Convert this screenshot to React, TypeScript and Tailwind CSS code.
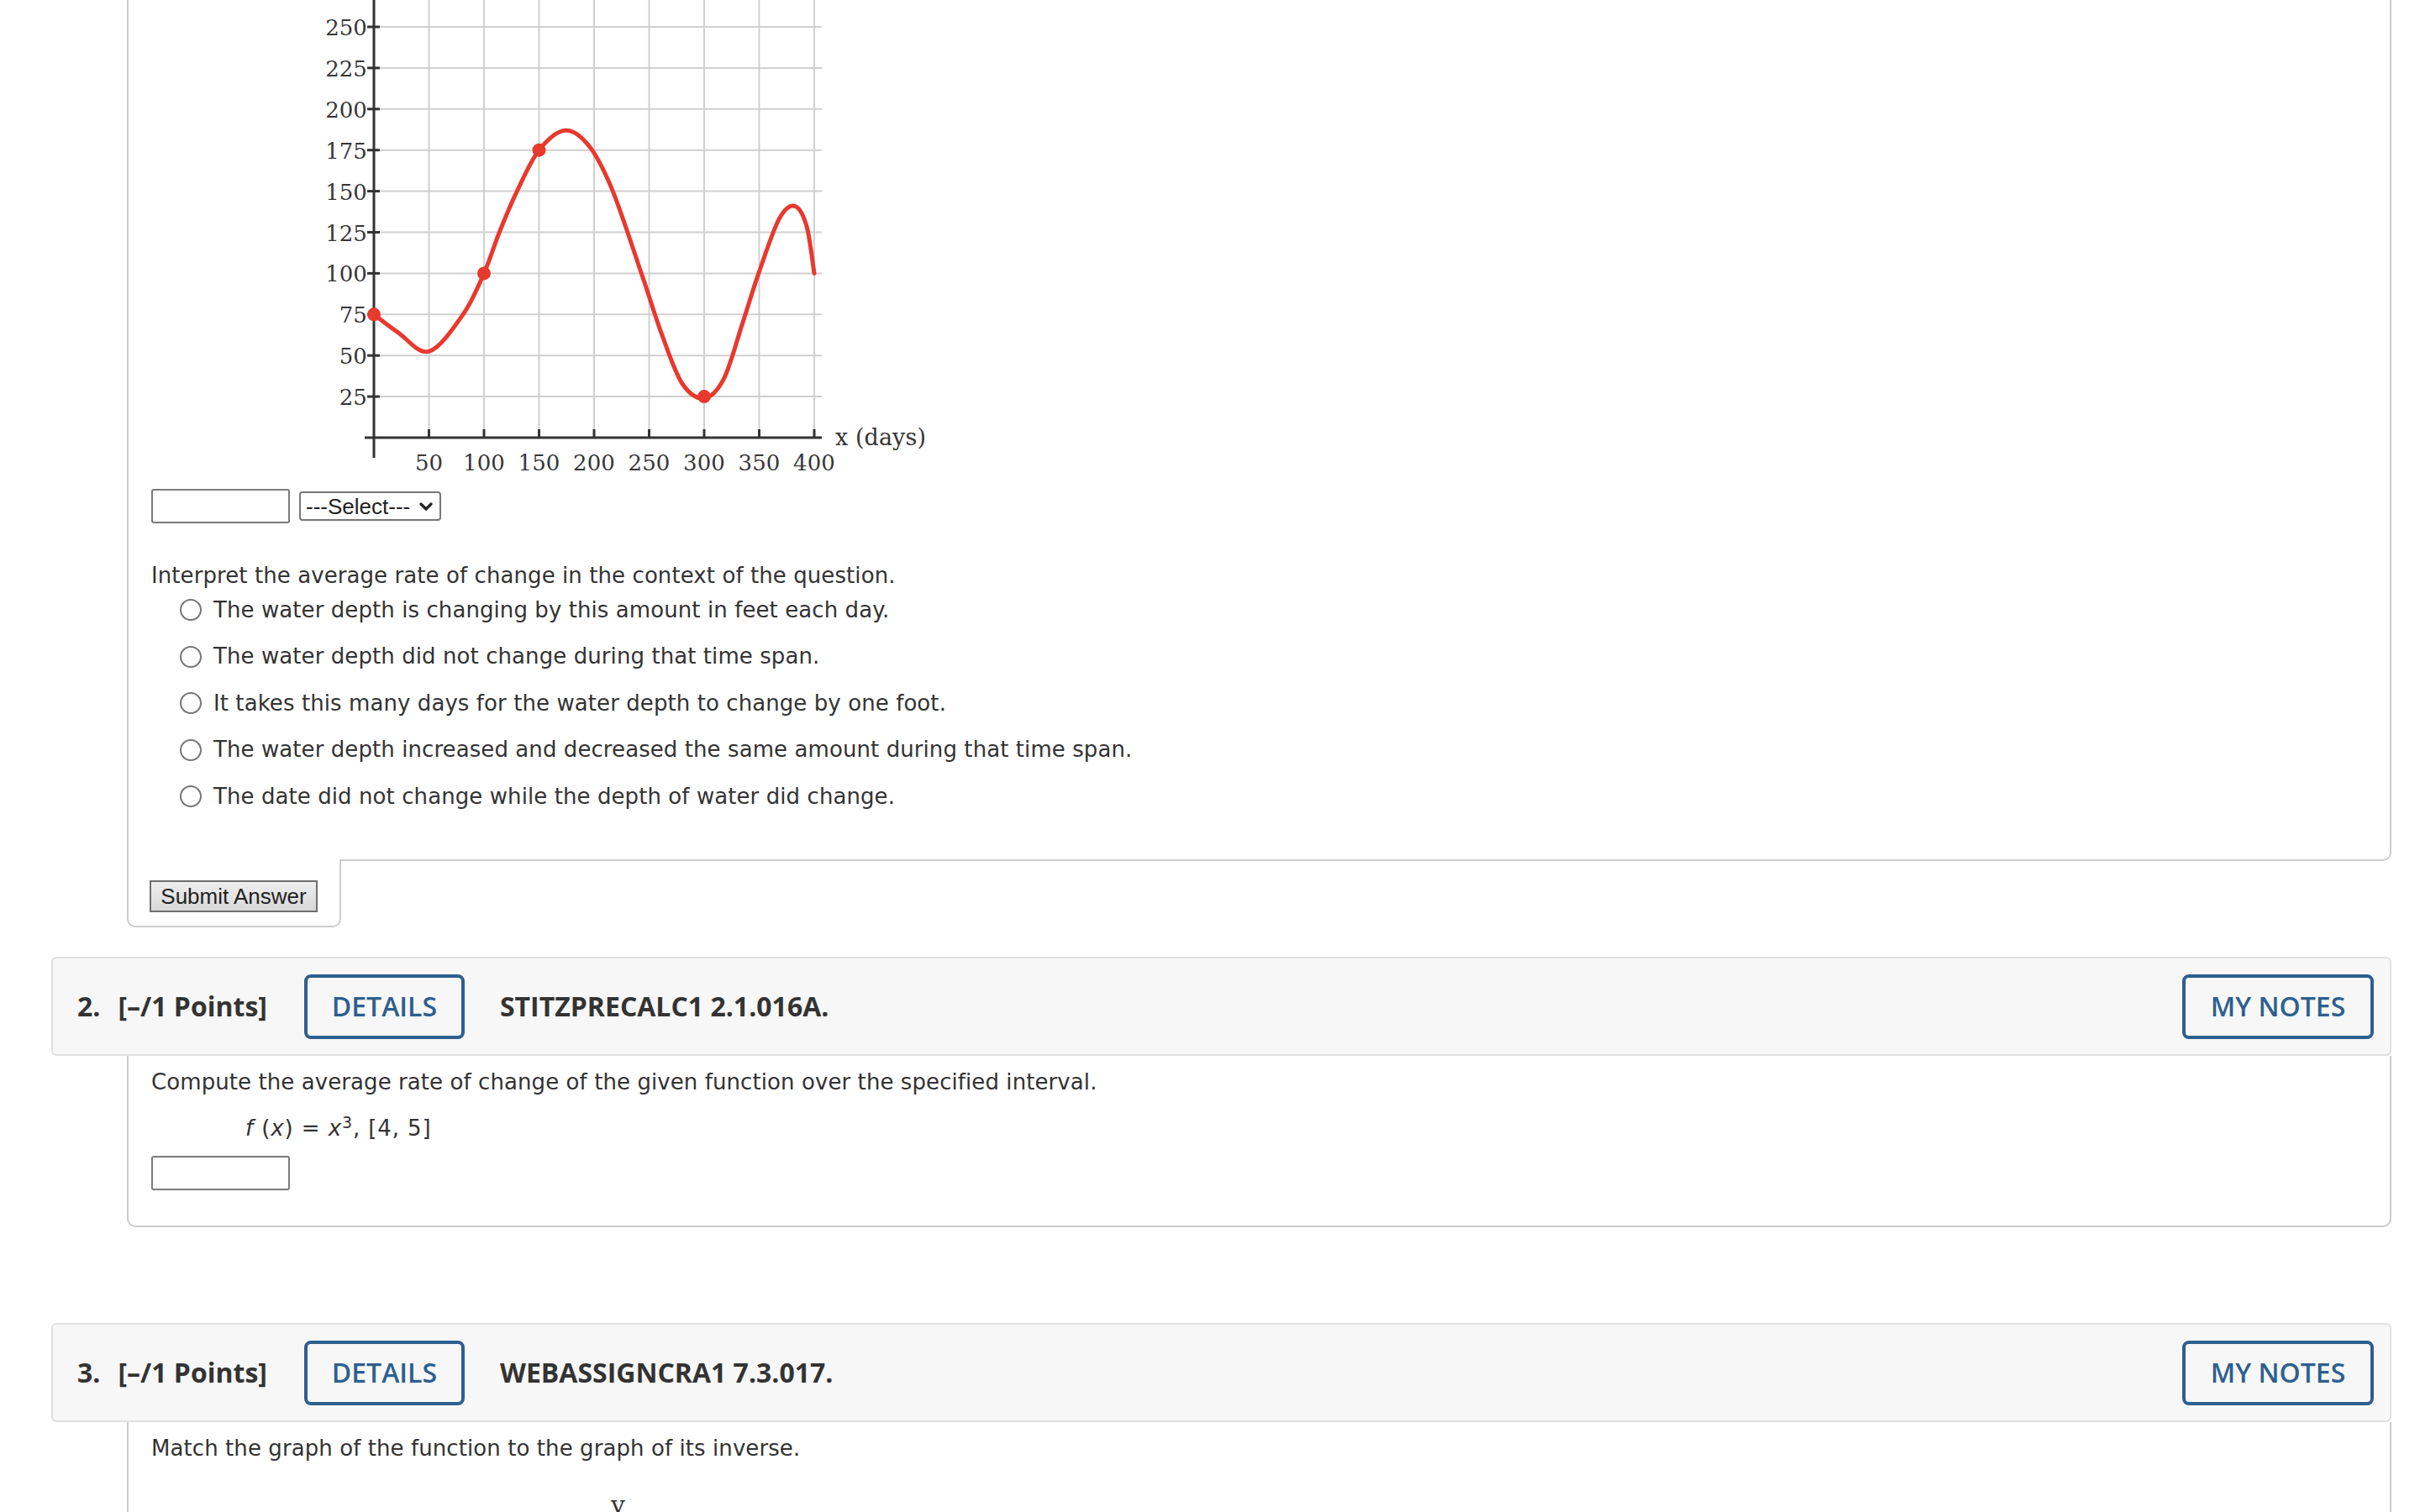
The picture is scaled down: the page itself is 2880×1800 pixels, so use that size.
import React from 'react';

const RED = '#e8392e';

// data -> svg coordinates for the depth chart
const px = (x: number) => 75 + x * 1.31;
const py = (y: number) => 521 - y * 1.956;

const curvePoints: [number, number][] = [
  [0, 75], [22, 64], [50, 52.5], [81, 75], [100, 100], [114, 125], [130, 150],
  [150, 175], [174, 187], [196, 177], [217, 150], [243, 100], [262, 62],
  [280, 33], [300, 24], [318, 36], [335, 70], [350, 101], [368, 133],
  [382, 141], [393, 129], [400, 100],
];

function smoothPath(data: [number, number][]) {
  const pts = data.map(([x, y]) => [px(x), py(y)]);
  let d = `M ${pts[0][0].toFixed(1)} ${pts[0][1].toFixed(1)}`;
  for (let i = 0; i < pts.length - 1; i++) {
    const p0 = pts[i - 1] || pts[i];
    const p1 = pts[i];
    const p2 = pts[i + 1];
    const p3 = pts[i + 2] || p2;
    const c1x = p1[0] + (p2[0] - p0[0]) / 6;
    const c1y = p1[1] + (p2[1] - p0[1]) / 6;
    const c2x = p2[0] - (p3[0] - p1[0]) / 6;
    const c2y = p2[1] - (p3[1] - p1[1]) / 6;
    d += ` C ${c1x.toFixed(1)} ${c1y.toFixed(1)} ${c2x.toFixed(1)} ${c2y.toFixed(1)} ${p2[0].toFixed(1)} ${p2[1].toFixed(1)}`;
  }
  return d;
}

function DepthChart() {
  const xs = [50, 100, 150, 200, 250, 300, 350, 400];
  const ys = [25, 50, 75, 100, 125, 150, 175, 200, 225, 250];
  const labelStyle = { fontFamily: '"DejaVu Serif", serif', fontSize: 26, fill: '#363636' };
  return (
    <svg width={760} height={570} viewBox="0 0 760 570" className="block">
      {/* grid */}
      {xs.map((x) => (
        <line key={`gx${x}`} x1={px(x)} x2={px(x)} y1={0} y2={521} stroke="#d0d0d0" strokeWidth={2} />
      ))}
      {ys.map((y) => (
        <line key={`gy${y}`} x1={75} x2={608} y1={py(y)} y2={py(y)} stroke="#d0d0d0" strokeWidth={2} />
      ))}
      {/* axes */}
      <line x1={64} x2={608} y1={521} y2={521} stroke="#333" strokeWidth={3} />
      <line x1={75} x2={75} y1={0} y2={545} stroke="#333" strokeWidth={3} />
      {xs.map((x) => (
        <line key={`tx${x}`} x1={px(x)} x2={px(x)} y1={511} y2={522} stroke="#333" strokeWidth={3} />
      ))}
      {ys.map((y) => (
        <line key={`ty${y}`} x1={67} x2={82} y1={py(y)} y2={py(y)} stroke="#333" strokeWidth={3} />
      ))}
      {/* labels */}
      {ys.map((y) => (
        <text key={`ly${y}`} x={67} y={py(y) + 10} textAnchor="end" style={labelStyle}>
          {y}
        </text>
      ))}
      {xs.map((x) => (
        <text key={`lx${x}`} x={px(x)} y={560} textAnchor="middle" style={labelStyle}>
          {x}
        </text>
      ))}
      <text x={624} y={530} style={{ ...labelStyle, fontSize: 27 }}>
        x (days)
      </text>
      {/* curve */}
      <path d={smoothPath(curvePoints)} fill="none" stroke={RED} strokeWidth={5} strokeLinecap="round" />
      {[[0, 75], [100, 100], [150, 175], [300, 25]].map(([x, y]) => (
        <circle key={`d${x}`} cx={px(x)} cy={py(y)} r={8} fill={RED} />
      ))}
    </svg>
  );
}

function TextInput() {
  return <div className="h-[41px] w-[165px] rounded-[3px] border-2 border-[#7a7a7a] bg-white" />;
}

function Radio({ label }: { label: string }) {
  return (
    <div className="flex h-[40px] items-center">
      <span className="ml-[34px] h-[26px] w-[26px] rounded-full border-2 border-[#767676] bg-white" />
      <span className="ml-[14px]">{label}</span>
    </div>
  );
}

function OutlineButton({ label, width }: { label: string; width: string }) {
  return (
    <div
      className={`flex h-[77px] ${width} items-center justify-center rounded-[8px] border-4 border-[#2d5f8f] text-[32px] font-semibold text-[#2d5f8f]`}
    >
      {label}
    </div>
  );
}

function QuestionHeader({ num, code }: { num: string; code: string }) {
  return (
    <div
      className="flex h-[118px] items-center rounded-[6px] border-2 border-[#e0e0e0] bg-[#f7f7f7] pl-[29px] pr-[19px] text-[32px] font-bold text-[#333]"
      style={{ fontFamily: '"Open Sans", sans-serif' }}
    >
      <span>{num}</span>
      <span className="ml-[21px]">[–/1 Points]</span>
      <div className="ml-[44px]">
        <OutlineButton label="DETAILS" width="w-[191px]" />
      </div>
      <span className="ml-[42px]">{code}</span>
      <div className="ml-auto">
        <OutlineButton label="MY NOTES" width="w-[228px]" />
      </div>
    </div>
  );
}

const options = [
  'The water depth is changing by this amount in feet each day.',
  'The water depth did not change during that time span.',
  'It takes this many days for the water depth to change by one foot.',
  'The water depth increased and decreased the same amount during that time span.',
  'The date did not change while the depth of water did change.',
];

export default function App() {
  const body = { fontFamily: '"DejaVu Sans", Verdana, sans-serif' };
  return (
    <div className="h-[1800px] w-[2880px] overflow-hidden bg-white">
      <div className="pl-[61px] pr-[34px]">
        {/* Question 1 (tail) */}
        <div className="ml-[90px]">
          <div
            className="rounded-br-[10px] border-b-2 border-l-2 border-r-2 border-[#cccccc] pb-[55px] pl-[27px] text-[26px] leading-[39px] tracking-[0.08px] text-[#333]"
            style={body}
          >
            <div className="ml-[190px]">
              <DepthChart />
            </div>
            <div className="mt-[12px] flex items-center gap-[11px]">
              <TextInput />
              <div
                className="flex h-[35px] w-[169px] items-center justify-between rounded-[4px] border-2 border-[#767676] bg-white pl-[6px] pr-[8px] text-[26px] leading-none tracking-normal text-[#222]"
                style={{ fontFamily: '"Liberation Sans", Arial, sans-serif' }}
              >
                <span>---Select---</span>
                <svg width="16" height="12" viewBox="0 0 16 12">
                  <path d="M2 3 L8 9 L14 3" fill="none" stroke="#222" strokeWidth="3.2" strokeLinecap="round" strokeLinejoin="round" />
                </svg>
              </div>
            </div>
            <p className="mt-[43px]">Interpret the average rate of change in the context of the question.</p>
            <div className="mt-[1px] flex flex-col gap-[15.5px]">
              {options.map((o) => (
                <Radio key={o} label={o} />
              ))}
            </div>
          </div>
          <div className="-mt-[2px] w-[255px] rounded-b-[10px] border-b-2 border-l-2 border-r-2 border-[#cccccc] bg-white pb-[16px] pl-[25px] pt-[25px]">
            <button
              className="h-[38px] w-[200px] border-2 border-[#6e6e6e] bg-gradient-to-b from-[#eeeeee] to-[#d8d8d8] text-[26px] leading-none text-[#222]"
              style={{ fontFamily: '"Liberation Sans", Arial, sans-serif' }}
            >
              Submit Answer
            </button>
          </div>
        </div>

        {/* Question 2 */}
        <div className="mt-[35px]">
          <QuestionHeader num="2." code="STITZPRECALC1 2.1.016A." />
          <div
            className="ml-[90px] rounded-b-[10px] border-b-2 border-l-2 border-r-2 border-[#cccccc] pb-[42px] pl-[27px] pt-[12px] text-[26px] leading-[39px] text-[#333]"
            style={body}
          >
            <p className="tracking-[0.08px]">
              Compute the average rate of change of the given function over the specified interval.
            </p>
            <p className="mt-[16px] pl-[112px] tracking-[0.9px]">
              <i>f</i> (<i>x</i>) = <i>x</i>
              <sup className="text-[19px]">3</sup>, [4, 5]
            </p>
            <div className="mt-[13px]">
              <TextInput />
            </div>
          </div>
        </div>

        {/* Question 3 */}
        <div className="mt-[114px]">
          <QuestionHeader num="3." code="WEBASSIGNCRA1 7.3.017." />
          <div
            className="ml-[90px] h-[400px] border-l-2 border-r-2 border-[#cccccc] pl-[27px] pt-[12px] text-[26px] leading-[39px] tracking-[0.08px] text-[#333]"
            style={body}
          >
            <p>Match the graph of the function to the graph of its inverse.</p>
            <div
              className="mt-[28px] pl-[547px] text-[30px] leading-[39px] text-[#333]"
              style={{ fontFamily: '"DejaVu Serif", serif' }}
            >
              y
            </div>
          </div>
        </div>
      </div>
    </div>
  );
}
